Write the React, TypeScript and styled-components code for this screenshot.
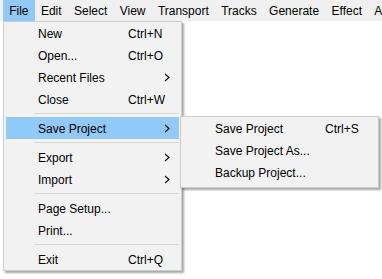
import React from 'react';
import styled, { createGlobalStyle } from 'styled-components';

const GlobalStyle = createGlobalStyle`
    html, body {
        margin: 0;
        padding: 0;
        background: #fff;
    }

    body {
        font-family: "Liberation Sans", Arial, sans-serif;
        font-size: 12px;
        color: #000;
    }
`;

const Window = styled.div`
    position: relative;
    width: 382px;
    height: 279px;
    overflow: hidden;
    background-color: #fff;
`;

const MenuBar = styled.div`
    display: flex;
    height: 21px;
    padding-left: 3px;
    background-color: #f0f0f0;
    white-space: nowrap;
`;

const BarItem = styled('div') <{ active?: boolean }>`
    box-sizing: border-box;
    height: 21px;
    padding: 2px 6.2px 0;
    line-height: 19px;
    background-color: ${props => props.active ? '#91c9f7' : 'transparent'};
`;

const Popup = styled('div') <{ top: number; left: number; width: number; padBottom?: number }>`
    position: absolute;
    top: ${props => props.top}px;
    left: ${props => props.left}px;
    width: ${props => props.width}px;
    box-sizing: border-box;
    padding: 0 2px ${props => props.padBottom || 0}px;
    background-color: #f2f2f2;
    border: 1px solid #cccccc;
    box-shadow: 2px 2px 2px rgba(0, 0, 0, 0.35);
`;

const Row = styled('div') <{ selected?: boolean }>`
    display: flex;
    align-items: center;
    box-sizing: border-box;
    height: 22px;
    padding: 1px 0 0 32px;
    white-space: nowrap;
    background-color: ${props => props.selected ? '#91c9f7' : 'transparent'};
`;

const Label = styled('span') <{ width: number }>`
    flex: none;
    width: ${props => props.width}px;
`;

const Shortcut = styled.span`
    flex: none;
`;

const Arrow = styled.svg`
    margin-left: auto;
    margin-right: 9px;
`;

const Separator = styled.div`
    display: flex;
    align-items: center;
    height: 7px;

    &::after {
        content: '';
        flex: 1;
        height: 1px;
        margin-left: 28px;
        background-color: #d7d7d7;
    }
`;

type Item = { label?: string; shortcut?: string; sub?: boolean; selected?: boolean; sep?: boolean };

const fileItems: Item[] = [
    { label: 'New', shortcut: 'Ctrl+N' },
    { label: 'Open...', shortcut: 'Ctrl+O' },
    { label: 'Recent Files', sub: true },
    { label: 'Close', shortcut: 'Ctrl+W' },
    { sep: true },
    { label: 'Save Project', sub: true, selected: true },
    { sep: true },
    { label: 'Export', sub: true },
    { label: 'Import', sub: true },
    { sep: true },
    { label: 'Page Setup...' },
    { label: 'Print...' },
    { sep: true },
    { label: 'Exit', shortcut: 'Ctrl+Q' },
];

const saveItems: Item[] = [
    { label: 'Save Project', shortcut: 'Ctrl+S' },
    { label: 'Save Project As...' },
    { label: 'Backup Project...' },
];

// last one runs off the window edge, as in the app
const menus = ['File', 'Edit', 'Select', 'View', 'Transport', 'Tracks', 'Generate', 'Effect', 'Analyze'];

const ChevronRight = () => (
    <Arrow width="6" height="9" viewBox="0 0 6 9">
        <path d="M1 1 L5 4.5 L1 8" fill="none" stroke="#000" strokeWidth="1.1" />
    </Arrow>
);

const MenuList: React.FC<{ items: Item[]; labelWidth: number }> = ({ items, labelWidth }) => (
    <>
        {items.map((item, i) =>
            item.sep ? (
                <Separator key={i} />
            ) : (
                <Row key={i} selected={item.selected}>
                    <Label width={labelWidth}>{item.label}</Label>
                    {item.shortcut && <Shortcut>{item.shortcut}</Shortcut>}
                    {item.sub && <ChevronRight />}
                </Row>
            )
        )}
    </>
);

const App: React.FC = () => {
    return (
        <Window>
            <GlobalStyle />
            <MenuBar>
                {menus.map(m => (
                    <BarItem key={m} active={m === 'File'}>{m}</BarItem>
                ))}
            </MenuBar>
            <Popup top={21} left={3} width={179}>
                <MenuList items={fileItems} labelWidth={90} />
            </Popup>
            <Popup top={116} left={180} width={199} padBottom={4}>
                <MenuList items={saveItems} labelWidth={110} />
            </Popup>
        </Window>
    );
};

export default App;
